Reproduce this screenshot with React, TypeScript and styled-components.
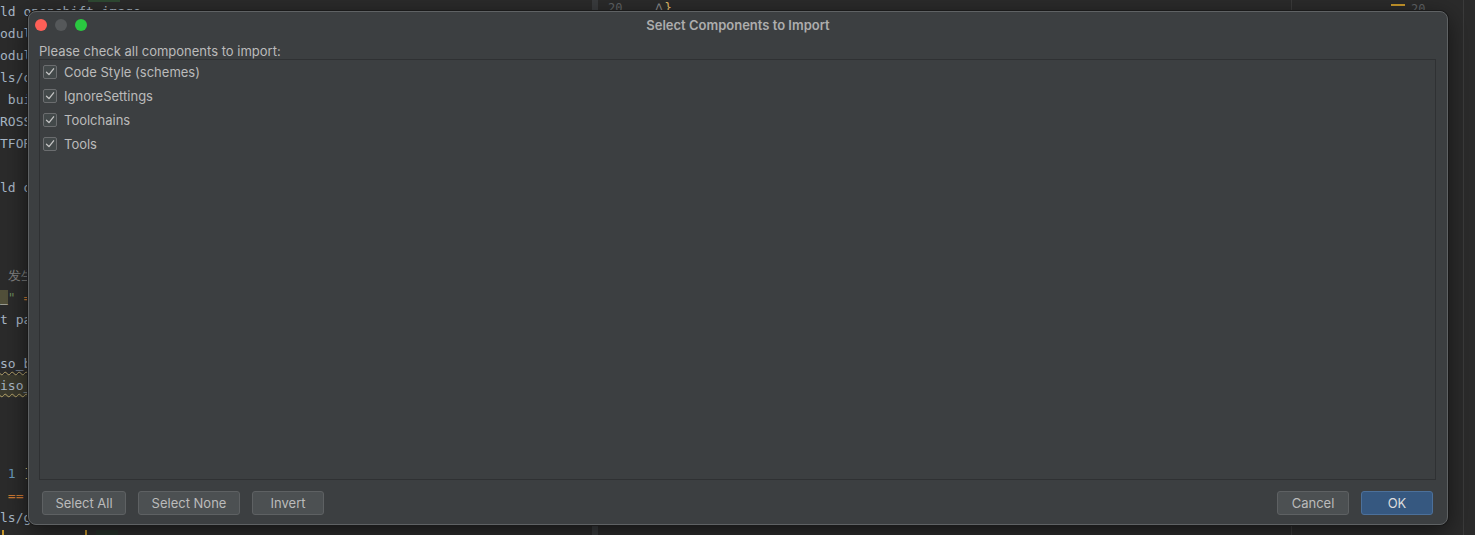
import React from "react";
import styled, { createGlobalStyle } from "styled-components";

const GlobalStyle = createGlobalStyle`
  html, body { margin: 0; padding: 0; background: #2b2b2b; overflow: hidden; }
  #root { width: 1475px; height: 535px; }
`;

const Screen = styled.div`
  position: relative;
  width: 1475px;
  height: 535px;
  display: grid;
  grid-template-columns: 592px 6px 693px 172px 12px;
  background: #2b2b2b;
  overflow: hidden;
`;

const EditorPane = styled.div`
  background: #2b2b2b;
  padding-top: 1px;
  font-family: "DejaVu Sans Mono", "Liberation Mono", monospace;
  font-size: 13px;
  color: #a9b7c6;
  overflow: hidden;
`;

const CodeLine = styled.div<{ $hl?: boolean; $wavy?: boolean }>`
  height: 22px;
  line-height: 22px;
  white-space: pre;
  background: ${(p) => (p.$hl ? "#3b3a2e" : "transparent")};
  ${(p) =>
    p.$wavy
      ? "text-decoration: underline wavy #b5a36a; text-decoration-thickness: 1px; text-underline-offset: 3px;"
      : ""}
`;

const Tok = styled.span<{ $c: string; $bg?: string }>`
  color: ${(p) => p.$c};
  background: ${(p) => p.$bg || "transparent"};
`;

const TopMarker = styled.div`
  position: absolute;
  left: 88px;
  top: 0;
  width: 32px;
  height: 2px;
  background: #2f4a33;
`;

const BottomMarker = styled.div<{ $x: number; $w: number; $c: string }>`
  position: absolute;
  left: ${(p) => p.$x}px;
  top: 530px;
  width: ${(p) => p.$w}px;
  height: 5px;
  background: ${(p) => p.$c};
`;

const Splitter = styled.div`
  background: #3a3c3e;
`;

const RightPane = styled.div`
  background: #2b2b2b;
  display: flex;
  align-items: flex-start;
  padding-left: 10px;
  font-family: "DejaVu Sans Mono", monospace;
  font-size: 12px;
  color: #606366;
`;

const LineNo = styled.span`
  margin-top: 1px;
  line-height: 14px;
`;

const FoldMark = styled.span`
  margin-left: 32px;
  margin-top: 1px;
  color: #8c8c8c;
  line-height: 14px;
`;

const Brace = styled.span`
  color: #e8bf6a;
  margin-top: 1px;
  line-height: 14px;
`;

const SidePane = styled.div`
  background: #2b2b2b;
  border-left: 1px solid #3b3b3b;
  display: flex;
  align-items: flex-start;
  padding-left: 99px;
  font-family: "DejaVu Sans Mono", monospace;
  font-size: 12px;
  color: #606366;
`;

const Dash = styled.span`
  display: block;
  width: 14px;
  height: 2px;
  margin-top: 4px;
  background: #c7972b;
`;

const SideNo = styled.span`
  margin-left: 6px;
  margin-top: 2px;
  line-height: 14px;
`;

const EdgePane = styled.div`
  background: #2b2b2b;
  border-left: 1px solid #3b3b3b;
`;

const Dialog = styled.div`
  position: absolute;
  left: 28px;
  top: 11px;
  width: 1420px;
  height: 514px;
  box-sizing: border-box;
  background: #3c3f41;
  border-radius: 8px;
  border: 1px solid #5f6264;
  box-shadow: 0 0 0 1px #1a1a1a, 0 6px 24px rgba(0, 0, 0, 0.55);
  display: flex;
  flex-direction: column;
  font-family: Inter, "Liberation Sans", Arial, sans-serif;
  font-size: 13px;
  color: #bbbbbb;
`;

const TitleBar = styled.div`
  height: 25px;
  display: grid;
  grid-template-columns: 1fr auto 1fr;
  align-items: center;
  padding: 0 6px;
`;

const Lights = styled.div`
  display: flex;
  gap: 8px;
`;

const Light = styled.span<{ $c: string }>`
  width: 12px;
  height: 12px;
  border-radius: 50%;
  background: ${(p) => p.$c};
`;

const Title = styled.div`
  font-weight: 600;
  font-size: 13px;
  color: #adadad;
`;

const Body = styled.div`
  flex: 1;
  display: flex;
  flex-direction: column;
  padding: 6px 11px 0 10px;
`;

const Prompt = styled.div`
  line-height: 16px;
  height: 16px;
`;

const ListBox = styled.div`
  height: 421px;
  box-sizing: border-box;
  border: 1px solid #2f3133;
  background: #3c3f41;
  display: flex;
  flex-direction: column;
`;

const Item = styled.label`
  height: 24px;
  display: flex;
  align-items: center;
  gap: 7px;
  padding-left: 3px;
`;

const Box = styled.span`
  width: 14px;
  height: 14px;
  box-sizing: border-box;
  border: 1px solid #6b6d6f;
  border-radius: 2px;
  background: #43494a;
  display: flex;
  align-items: center;
  justify-content: center;
`;

const Footer = styled.div`
  display: flex;
  align-items: center;
  gap: 12px;
  padding: 11px 14px 9px 13px;
`;

const Spacer = styled.div`
  flex: 1;
`;

const Button = styled.button<{ $w: number; $primary?: boolean }>`
  width: ${(p) => p.$w}px;
  height: 24px;
  box-sizing: border-box;
  border-radius: 3px;
  border: 1px solid ${(p) => (p.$primary ? "#4c709a" : "#5e6163")};
  background: ${(p) => (p.$primary ? "#365880" : "#4c5052")};
  color: ${(p) => (p.$primary ? "#dcdcdc" : "#bbbbbb")};
  font-family: Inter, "Liberation Sans", Arial, sans-serif;
  font-size: 13px;
  padding: 0;
`;

const Check = () => (
  <svg width="10" height="10" viewBox="0 0 10 10">
    <path d="M1.5 5.2 L4 7.6 L8.6 1.8" fill="none" stroke="#c4c4c4" strokeWidth="1.3" strokeLinecap="round" strokeLinejoin="round" />
  </svg>
);

const items = ["Code Style (schemes)", "IgnoreSettings", "Toolchains", "Tools"];

export default function App() {
  return (
    <>
      <GlobalStyle />
      <Screen>
        <EditorPane>
          <CodeLine>ld openshift_image</CodeLine>
          <CodeLine>odule</CodeLine>
          <CodeLine>odule</CodeLine>
          <CodeLine>ls/os</CodeLine>
          <CodeLine> build</CodeLine>
          <CodeLine>ROSS</CodeLine>
          <CodeLine>TFORM</CodeLine>
          <CodeLine> </CodeLine>
          <CodeLine>ld openshift</CodeLine>
          <CodeLine> </CodeLine>
          <CodeLine> </CodeLine>
          <CodeLine> </CodeLine>
          <CodeLine>
            <Tok $c="#808080"> 发生错误</Tok>
          </CodeLine>
          <CodeLine>
            <Tok $c="#d0d0d0" $bg="#52503a">_</Tok>
            <Tok $c="#6a8759">"</Tok>
            <Tok $c="#cc7832"> ==</Tok>
          </CodeLine>
          <CodeLine>t path</CodeLine>
          <CodeLine> </CodeLine>
          <CodeLine $wavy>so_build</CodeLine>
          <CodeLine $hl $wavy>iso_build</CodeLine>
          <CodeLine> </CodeLine>
          <CodeLine> </CodeLine>
          <CodeLine> </CodeLine>
          <CodeLine>
            <Tok $c="#6897bb"> 1</Tok>
            <Tok $c="#e8bf6a"> ]</Tok>
          </CodeLine>
          <CodeLine>
            <Tok $c="#cc7832"> ==</Tok>
          </CodeLine>
          <CodeLine>ls/gen</CodeLine>
        </EditorPane>
        <Splitter />
        <RightPane>
          <LineNo>20</LineNo>
          <FoldMark>⋀</FoldMark>
          <Brace>{"}"}</Brace>
        </RightPane>
        <SidePane>
          <Dash />
          <SideNo>20</SideNo>
        </SidePane>
        <EdgePane />
        <TopMarker />
        <BottomMarker $x={2} $w={2} $c="#c7972b" />
        <BottomMarker $x={85} $w={2} $c="#c7972b" />
        <BottomMarker $x={96} $w={22} $c="#26322a" />

        <Dialog>
          <TitleBar>
            <Lights>
              <Light $c="#fe5f57" />
              <Light $c="#55585a" />
              <Light $c="#2ac840" />
            </Lights>
            <Title>Select Components to Import</Title>
            <span />
          </TitleBar>
          <Body>
            <Prompt>Please check all components to import:</Prompt>
            <ListBox>
              {items.map((t) => (
                <Item key={t}>
                  <Box>
                    <Check />
                  </Box>
                  {t}
                </Item>
              ))}
            </ListBox>
          </Body>
          <Footer>
            <Button $w={84}>Select All</Button>
            <Button $w={102}>Select None</Button>
            <Button $w={72}>Invert</Button>
            <Spacer />
            <Button $w={72}>Cancel</Button>
            <Button $w={72} $primary>
              OK
            </Button>
          </Footer>
        </Dialog>
      </Screen>
    </>
  );
}
